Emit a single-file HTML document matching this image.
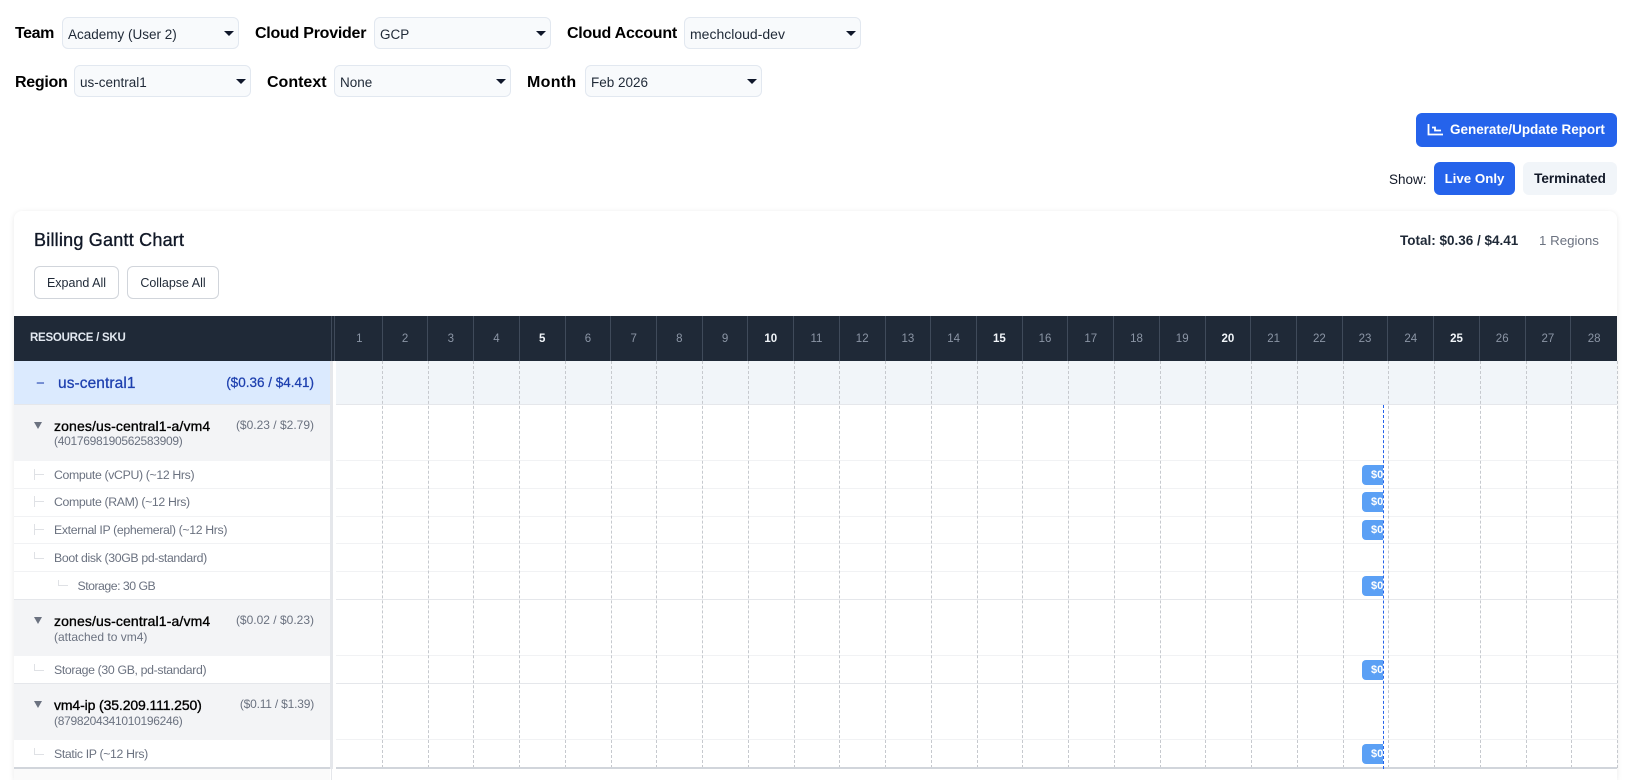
<!DOCTYPE html>
<html lang="en">
<head>
<meta charset="utf-8">
<title>Billing Gantt Chart</title>
<style>
*{box-sizing:border-box}
html,body{margin:0;padding:0;width:1630px;height:780px;overflow:hidden;background:#fff;font-family:"Liberation Sans",Arial,sans-serif;color:#111827}
#root{position:relative;width:1630px;height:780px;overflow:hidden}
.t{position:absolute;white-space:nowrap;line-height:20px;height:20px}
.lb{font-size:16px;font-weight:700;color:#000}
.sel{position:absolute;width:177px;height:32px;background:#f8fafc;border:1px solid #e2e8f0;border-radius:6px;font-size:13.5px;line-height:33px;padding-left:5px;color:#1f2937}
.sel:after{content:"";position:absolute;right:4px;top:13px;border-left:5px solid transparent;border-right:5px solid transparent;border-top:5px solid #0f172a}
.btn{position:absolute;border-radius:6px;text-align:center}
.card{position:absolute;left:14px;top:211px;width:1603px;height:569px;background:#fff;border-radius:8px 8px 0 0;box-shadow:0 1px 6px rgba(0,0,0,.09)}
.hdr{position:absolute;left:14px;top:316px;width:1603px;height:45px;background:#1f2937}
.days{position:absolute;left:337px;top:316px;width:1280px;height:45px;display:grid;grid-template-columns:repeat(28,1fr)}
.days div{border-right:1px solid #3f4a5a;text-align:center;font-size:11.5px;line-height:46px;color:#8b95a5}
.days div:last-child{border-right:0}
.days b{color:#f1f5f9}
.lines{position:absolute;left:337px;top:361px;width:1281px;height:407px;display:grid;grid-template-columns:repeat(28,1fr)}
.lines div{border-right:1px dashed #c6c9ce}
.p{position:absolute;left:14px;width:316px}
.g{position:absolute;left:336px;width:1281px}
.res{background:#f3f4f6}
.bb{border-bottom:1px solid #f1f2f4}
.bs{border-bottom:1px solid #e5e7eb}
.name{font-size:14px;color:#000;-webkit-text-stroke:.35px #000;left:54px;letter-spacing:.13px}
.id{font-size:12px;color:#6b7280;left:54px}
.cost{font-size:12px;color:#6b7280;right:316px;text-align:right}
.sku{font-size:12.3px;color:#6b7280;left:54px;letter-spacing:-.35px}
.tri{position:absolute;left:34px;border-left:4px solid transparent;border-right:4px solid transparent;border-top:7px solid #6b7280}
.v{position:absolute;width:1px;background:#dfe1e5}
.h{position:absolute;height:1px;background:#dfe1e5}
.bar{position:absolute;left:1362px;width:21px;height:20px;background:#5ba0f5;border-radius:4px 0 0 4px;overflow:hidden;color:#fff;font-size:11px;font-weight:700;line-height:20px;padding-left:9px}
</style>
</head>
<body>
<div id="root">

<div class="t lb" style="left:15px;top:24px;letter-spacing:-.4px">Team</div>
<div class="sel" style="left:62px;top:17px">Academy (User 2)</div>
<div class="t lb" style="left:255px;top:24px;letter-spacing:-.25px">Cloud Provider</div>
<div class="sel" style="left:374px;top:17px">GCP</div>
<div class="t lb" style="left:567px;top:24px;letter-spacing:-.25px">Cloud Account</div>
<div class="sel" style="left:684px;top:17px;font-size:14px">mechcloud-dev</div>

<div class="t lb" style="left:15px;top:73px;letter-spacing:-.3px">Region</div>
<div class="sel" style="left:74px;top:65px">us-central1</div>
<div class="t lb" style="left:267px;top:73px">Context</div>
<div class="sel" style="left:334px;top:65px">None</div>
<div class="t lb" style="left:527px;top:73px;letter-spacing:.3px">Month</div>
<div class="sel" style="left:585px;top:65px">Feb 2026</div>

<div class="btn" style="left:1416px;top:113px;width:201px;height:34px;background:#2563eb"></div>
<svg style="position:absolute;left:1426px;top:121px" width="20" height="16" viewBox="0 0 20 16" fill="none" stroke="#fff" stroke-width="1.8"><path d="M2.5 3V13.5H17"/><path d="M6 6.5H9V9.5H15"/></svg>
<div class="t" style="left:1450px;top:120px;font-size:13.5px;font-weight:700;color:#fff;letter-spacing:-.02px">Generate/Update Report</div>

<div class="t" style="left:1389px;top:170px;font-size:13.5px;color:#111827">Show:</div>
<div class="btn" style="left:1434px;top:162px;width:81px;height:33px;background:#2563eb;color:#fff;font-size:13.3px;font-weight:700;line-height:34px">Live Only</div>
<div class="btn" style="left:1523px;top:162px;width:94px;height:33px;background:#f1f5f9;color:#111827;font-size:13.5px;font-weight:700;line-height:34px">Terminated</div>

<div class="card"></div>
<div class="t" style="left:34px;top:230px;font-size:18px;color:#111827;-webkit-text-stroke:.35px #111827;letter-spacing:.22px">Billing Gantt Chart</div>
<div class="t" style="left:1400px;top:231px;font-size:13.5px;font-weight:700;color:#1f2937">Total: $0.36 / $4.41</div>
<div class="t" style="left:1539px;top:231px;font-size:13.3px;color:#6b7280">1 Regions</div>
<div class="btn" style="left:34px;top:266px;width:85px;height:33px;background:#fff;border:1px solid #d1d5db;font-size:12.5px;line-height:32px;color:#1f2937">Expand All</div>
<div class="btn" style="left:127px;top:266px;width:92px;height:33px;background:#fff;border:1px solid #d1d5db;font-size:12.5px;line-height:32px;color:#1f2937">Collapse All</div>

<div class="hdr"></div>
<div style="position:absolute;left:331px;top:316px;width:1px;height:45px;background:#3f4a5a"></div>
<div style="position:absolute;left:334px;top:316px;width:1px;height:45px;background:#3f4a5a"></div>
<div class="t" style="left:30px;top:328px;font-size:11.5px;font-weight:700;color:#e2e8f0;letter-spacing:-.25px">RESOURCE / SKU</div>
<div class="days">
<div>1</div><div>2</div><div>3</div><div>4</div><div><b>5</b></div><div>6</div><div>7</div><div>8</div><div>9</div><div><b>10</b></div><div>11</div><div>12</div><div>13</div><div>14</div><div><b>15</b></div><div>16</div><div>17</div><div>18</div><div>19</div><div><b>20</b></div><div>21</div><div>22</div><div>23</div><div>24</div><div><b>25</b></div><div>26</div><div>27</div><div>28</div>
</div>

<!-- left column rows -->
<div class="p bs" style="top:361px;height:44px;background:#dbeafe"></div>
<div class="p res" style="top:405px;height:56px"></div>
<div class="p bb" style="top:461px;height:28px"></div>
<div class="p bb" style="top:489px;height:28px"></div>
<div class="p bb" style="top:517px;height:27px"></div>
<div class="p bb" style="top:544px;height:28px"></div>
<div class="p bs" style="top:572px;height:28px"></div>
<div class="p res" style="top:600px;height:56px"></div>
<div class="p bs" style="top:656px;height:28px"></div>
<div class="p res" style="top:684px;height:56px"></div>
<div class="p" style="top:740px;height:27px"></div>
<div class="p" style="top:769px;height:11px;background:#fafafa"></div>

<!-- divider -->
<div style="position:absolute;left:330px;top:361px;width:3px;height:408px;background:#e5e7eb"></div>
<div style="position:absolute;left:331px;top:769px;width:1px;height:11px;background:#e5e7eb"></div>

<!-- right column rows -->
<div class="g bs" style="top:361px;height:44px;background:#f1f5f9"></div>
<div class="g bb" style="top:405px;height:56px"></div>
<div class="g bb" style="top:461px;height:28px"></div>
<div class="g bb" style="top:489px;height:28px"></div>
<div class="g bb" style="top:517px;height:27px"></div>
<div class="g bb" style="top:544px;height:28px"></div>
<div class="g bs" style="top:572px;height:28px"></div>
<div class="g bb" style="top:600px;height:56px"></div>
<div class="g bs" style="top:656px;height:28px"></div>
<div class="g bb" style="top:684px;height:56px"></div>

<div class="lines">
<div></div><div></div><div></div><div></div><div></div><div></div><div></div><div></div><div></div><div></div><div></div><div></div><div></div><div></div><div></div><div></div><div></div><div></div><div></div><div></div><div></div><div></div><div></div><div></div><div></div><div></div><div></div><div></div>
</div>

<div style="position:absolute;left:14px;top:767px;width:316px;height:2px;background:#d1d5db"></div>
<div style="position:absolute;left:336px;top:767px;width:1281px;height:2px;background:#d1d5db"></div>

<!-- region row text -->
<div class="t" style="left:36px;top:374px;font-size:15px;color:#1e40af">−</div>
<div class="t" style="left:58px;top:374px;font-size:15.5px;color:#1e40af;-webkit-text-stroke:.25px #1e40af;letter-spacing:.08px">us-central1</div>
<div class="t" style="right:1316px;top:373px;font-size:13.5px;color:#1e40af;-webkit-text-stroke:.25px #1e40af">($0.36 / $4.41)</div>

<!-- resource 1 -->
<div class="tri" style="top:422px"></div>
<div class="t name" style="top:416px">zones/us-central1-a/vm4</div>
<div class="t id" style="top:431px;letter-spacing:-.3px">(4017698190562583909)</div>
<div class="t cost" style="right:1316px;top:415px">($0.23 / $2.79)</div>

<div class="v" style="left:34px;top:469px;height:11px"></div><div class="h" style="left:34px;top:474px;width:10px"></div>
<div class="t sku" style="top:465px">Compute (vCPU) (~12 Hrs)</div>
<div class="v" style="left:34px;top:496px;height:11px"></div><div class="h" style="left:34px;top:501px;width:10px"></div>
<div class="t sku" style="top:492px">Compute (RAM) (~12 Hrs)</div>
<div class="v" style="left:34px;top:524px;height:11px"></div><div class="h" style="left:34px;top:529px;width:10px"></div>
<div class="t sku" style="top:520px">External IP (ephemeral) (~12 Hrs)</div>
<div class="v" style="left:34px;top:552px;height:6px"></div><div class="h" style="left:34px;top:558px;width:10px"></div>
<div class="t sku" style="top:548px">Boot disk (30GB pd-standard)</div>
<div class="v" style="left:58px;top:580px;height:6px"></div><div class="h" style="left:58px;top:585px;width:10px"></div>
<div class="t sku" style="left:77.5px;top:576px;letter-spacing:-.5px">Storage: 30 GB</div>

<!-- resource 2 -->
<div class="tri" style="top:617px"></div>
<div class="t name" style="top:611px">zones/us-central1-a/vm4</div>
<div class="t id" style="top:627px">(attached to vm4)</div>
<div class="t cost" style="right:1316px;top:610px">($0.02 / $0.23)</div>
<div class="v" style="left:34px;top:664px;height:6px"></div><div class="h" style="left:34px;top:670px;width:10px"></div>
<div class="t sku" style="top:660px">Storage (30 GB, pd-standard)</div>

<!-- resource 3 -->
<div class="tri" style="top:701px"></div>
<div class="t name" style="top:695px;letter-spacing:-.12px">vm4-ip (35.209.111.250)</div>
<div class="t id" style="top:711px;letter-spacing:-.3px">(8798204341010196246)</div>
<div class="t cost" style="right:1316px;top:694px;letter-spacing:-.2px">($0.11 / $1.39)</div>
<div class="v" style="left:34px;top:748px;height:6px"></div><div class="h" style="left:34px;top:754px;width:10px"></div>
<div class="t sku" style="top:744px">Static IP (~12 Hrs)</div>

<!-- bars -->
<div class="bar" style="top:465px">$0.01</div>
<div class="bar" style="top:492px">$0.01</div>
<div class="bar" style="top:520px">$0.01</div>
<div class="bar" style="top:576px">$0.01</div>
<div class="bar" style="top:660px">$0.02</div>
<div class="bar" style="top:744px">$0.11</div>

<div style="position:absolute;left:1383px;top:405px;height:364px;border-left:1px dashed #2563eb"></div>

</div>
</body>
</html>
